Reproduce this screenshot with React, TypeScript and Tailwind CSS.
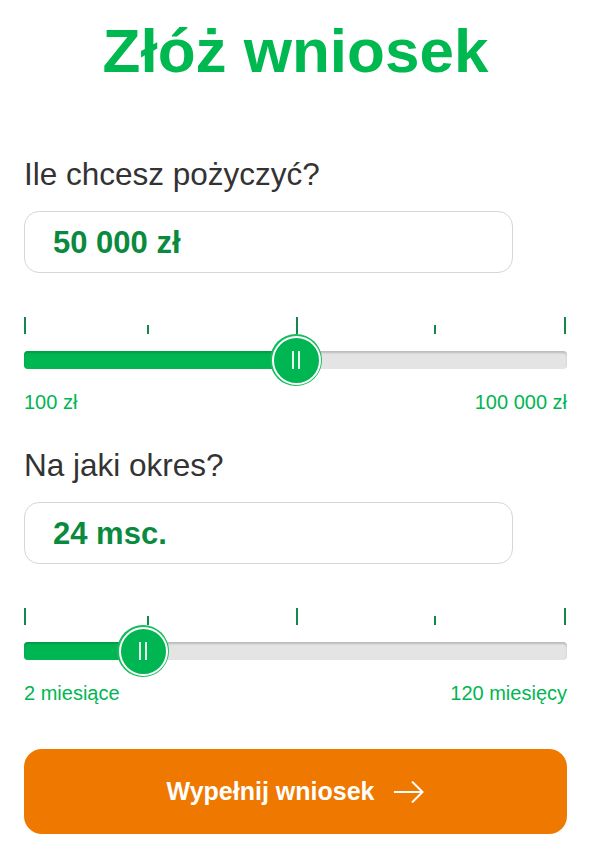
import React from "react";

const ticks = [
  { left: 0, big: true },
  { left: 123, big: false },
  { left: 272, big: true },
  { left: 410, big: false },
  { left: 540, big: true },
];

function Slider({ pos, min, max }: { pos: number; min: string; max: string }) {
  return (
    <div className="mt-[44px]">
      {/* tick marks */}
      <div className="relative h-[17px]">
        {ticks.map((t) => (
          <div
            key={t.left}
            className={`absolute bottom-0 w-[2px] bg-[#12894a] ${t.big ? "h-[17px]" : "h-[9px]"}`}
            style={{ left: t.left }}
          />
        ))}
      </div>
      {/* track */}
      <div className="relative mt-[17px] h-[18px] rounded-[4px] bg-[#e4e4e4] shadow-[inset_0_2px_2px_rgba(0,0,0,0.18)]">
        <div
          className="h-full rounded-l-[4px] bg-[#00b652] shadow-[inset_0_2px_2px_rgba(0,0,0,0.15)]"
          style={{ width: pos }}
        />
        <div
          className="absolute top-1/2 h-[52px] w-[52px] -translate-x-1/2 -translate-y-1/2 rounded-full bg-[#18bb5e] p-[1.5px]"
          style={{ left: pos }}
        >
          <div className="flex h-full w-full items-center justify-center gap-[4px] rounded-full border-2 border-white bg-[#00b652]">
            <div className="h-[18px] w-[2px] bg-white/90" />
            <div className="h-[18px] w-[2px] bg-white/90" />
          </div>
        </div>
      </div>
      <div className="mt-[23px] flex justify-between text-[20px] leading-[20px] text-[#00b652]">
        <span>{min}</span>
        <span>{max}</span>
      </div>
    </div>
  );
}

function Field({ value }: { value: string }) {
  return (
    <div className="mt-[21px] flex h-[62px] w-[489px] items-center rounded-[15px] border border-[#d6d6d6] bg-white pl-[28px]">
      <span className="text-[31px] font-bold leading-none text-[#0a8a3e]">{value}</span>
    </div>
  );
}

export default function App() {
  return (
    <main className="min-h-[865px] w-[593px] bg-white pl-6 pr-[26px] font-['Liberation_Sans',Arial,sans-serif]">
      <h1 className="pt-[20px] text-center text-[62px] font-bold leading-[62px] text-[#00b850]">
        Złóż wniosek
      </h1>

      <h2 className="mt-[77px] text-[31.5px] leading-[31px] text-[#333333]">Ile chcesz pożyczyć?</h2>
      <Field value="50 000 zł" />
      <Slider pos={272} min="100 zł" max="100 000 zł" />

      <h2 className="mt-[38px] text-[31.5px] leading-[31px] text-[#333333]">Na jaki okres?</h2>
      <Field value="24 msc." />
      <Slider pos={119} min="2 miesiące" max="120 miesięcy" />

      <button className="mt-[46px] flex h-[85px] w-full items-center justify-center gap-[20px] rounded-[18px] bg-[#ef7900] text-[25px] font-bold text-white">
        <span>Wypełnij wniosek</span>
        <svg width="30" height="22" viewBox="0 0 30 22" fill="none" stroke="white" strokeWidth="2">
          <path d="M0 11H29M18 0.5L28.5 11L18 21.5" />
        </svg>
      </button>
    </main>
  );
}
